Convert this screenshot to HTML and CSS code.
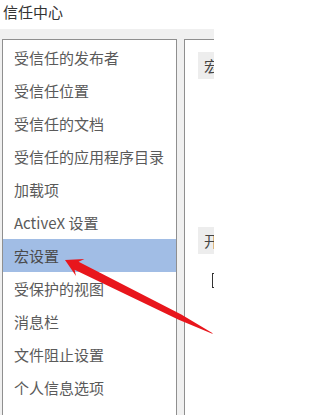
FILE: index.html
```html
<!DOCTYPE html>
<html lang="zh-CN">
<head>
<meta charset="utf-8">
<title>信任中心</title>
<link rel="stylesheet" href="styles.css">
</head>
<body>
<div class="page">
  <div class="title">信任中心</div>
  <div class="main">
    <ul class="nav">
      <li>受信任的发布者</li>
      <li>受信任位置</li>
      <li>受信任的文档</li>
      <li>受信任的应用程序目录</li>
      <li>加载项</li>
      <li>ActiveX 设置</li>
      <li class="active">宏设置</li>
      <li>受保护的视图</li>
      <li>消息栏</li>
      <li>文件阻止设置</li>
      <li>个人信息选项</li>
    </ul>
    <div class="detail">
      <div class="sec-head">宏设置</div>
      <div class="sec-body"></div>
      <div class="sec-head">开发人员宏设置</div>
      <div class="check"><span class="box"></span><span>信任对 VBA 工程对象模型的访问</span></div>
    </div>
  </div>
  <svg class="arrow" width="225" height="415" viewBox="0 0 225 415">
    <polygon fill="#e8161c" points="65,260 84.4,259.1 78.6,261.8 181.3,314.4 212.7,333.3 212.3,333.7 178.7,319.8 74.6,269.8 76,276.1"/>
  </svg>
</div>
</body>
</html>
```

FILE: styles.css
```css
html, body {
  margin: 0;
  padding: 0;
  background: #ffffff;
}
.page {
  position: relative;
  width: 225px;
  height: 415px;
  overflow: hidden;
  font-family: "Noto Sans CJK SC", "Noto Sans", sans-serif;
}
.title {
  height: 29px;
  box-sizing: border-box;
  padding: 0 0 0 3px;
  line-height: 24px;
  font-size: 15px;
  color: #333333;
}
.main {
  display: flex;
  gap: 7px;
  width: 214px;
  height: 386px;
  box-sizing: border-box;
  padding: 10px 0 0 2px;
  background: #f0f0f0;
}
.nav {
  flex: 0 0 175px;
  box-sizing: border-box;
  margin: 0;
  padding: 1px 0 0 0;
  list-style: none;
  background: #ffffff;
  border: 1px solid #8f8f8f;
  border-bottom: none;
  overflow: hidden;
}
.nav li {
  height: 33px;
  line-height: 33px;
  padding-left: 11px;
  font-size: 15px;
  color: #5a5a5a;
  white-space: nowrap;
}
.nav li.active {
  background: #a1bde5;
  color: #4a4a4a;
}
.detail {
  flex: 0 0 30px;
  box-sizing: border-box;
  padding: 12px 0 0 13px;
  background: #ffffff;
  border-left: 1px solid #8f8f8f;
  border-top: 1px solid #8f8f8f;
  overflow: hidden;
  display: flex;
  flex-direction: column;
}
.sec-head {
  flex: 0 0 auto;
  width: 300px;
  height: 27px;
  line-height: 27px;
  padding-left: 6px;
  background: #ededed;
  font-size: 15px;
  color: #444444;
  white-space: nowrap;
}
.sec-body {
  flex: 0 0 148px;
}
.check {
  display: flex;
  align-items: center;
  gap: 6px;
  margin: 16px 0 0 14px;
  width: 300px;
  font-size: 15px;
  color: #444444;
  white-space: nowrap;
}
.box {
  flex: 0 0 auto;
  width: 11px;
  height: 13px;
  border: 1px solid #333333;
  background: #ffffff;
}
.arrow {
  position: absolute;
  left: 0;
  top: 0;
  pointer-events: none;
}
```
